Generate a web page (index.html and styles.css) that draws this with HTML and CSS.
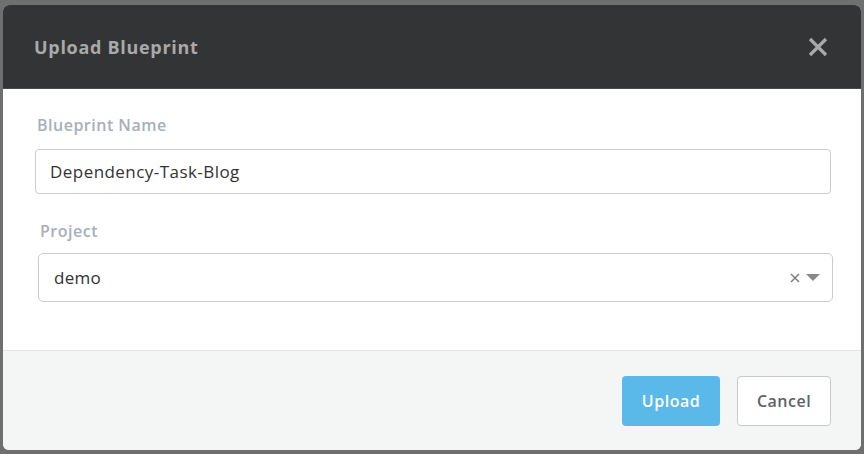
FILE: index.html
```html
<!DOCTYPE html>
<html>
<head>
<meta charset="utf-8">
<link rel="stylesheet" href="styles.css">
</head>
<body>
<div class="modal">
  <div class="header">
    <h1 class="title">Upload Blueprint</h1>
    <svg class="close" width="20" height="20" viewBox="0 0 20 20"><path d="M2 2 L18 18 M18 2 L2 18" stroke="#a9a9a9" stroke-width="3.2" stroke-linecap="butt"/></svg>
  </div>
  <div class="body">
    <div class="field name-field">
      <label class="label">Blueprint Name</label>
      <div class="input">Dependency-Task-Blog</div>
    </div>
    <div class="field project-field">
      <label class="label">Project</label>
      <div class="select">
        <span class="value">demo</span>
        <span class="controls">
          <svg width="10" height="10" viewBox="0 0 10 10"><path d="M1 1 L9 9 M9 1 L1 9" stroke="#777" stroke-width="1.4"/></svg>
          <svg width="14" height="8" viewBox="0 0 14 8"><path d="M0 0 L14 0 L7 7 Z" fill="#888"/></svg>
        </span>
      </div>
    </div>
  </div>
  <div class="footer">
    <button class="btn primary">Upload</button>
    <button class="btn secondary">Cancel</button>
  </div>
</div>
</body>
</html>
```
FILE: styles.css
```css
html, body {
  margin: 0;
  padding: 0;
}
body {
  background: #6f6f6f;
  width: 864px;
  height: 454px;
  overflow: hidden;
  font-family: "Open Sans", Lato, sans-serif;
}
.modal {
  margin: 5px 3px 0 3px;
  width: 858px;
  height: 445px;
  border-radius: 6px;
  overflow: hidden;
  display: flex;
  flex-direction: column;
  background: #fff;
}
.header {
  height: 84px;
  background: #333436;
  border-bottom: 1px solid #4a4b4d;
  display: flex;
  align-items: center;
  justify-content: space-between;
  padding: 0 33px 0 31px;
  box-sizing: border-box;
}
.title {
  margin: 0;
  font-size: 18px;
  font-weight: 700;
  color: #a9a9a9;
  letter-spacing: 0.7px;
}
.body {
  height: 262px;
  padding: 26px 30px 0 32px;
  box-sizing: border-box;
  border-bottom: 1px solid #e3e5e6;
}
.field {
  display: flex;
  flex-direction: column;
}
.label {
  font-size: 16px;
  font-weight: 600;
  letter-spacing: 0.5px;
  line-height: 20px;
  color: #a6b0b9;
  margin-bottom: 14px;
  padding-left: 2px;
}
.input {
  height: 45px;
  border: 1px solid #c9cbcc;
  border-radius: 4px;
  box-sizing: border-box;
  display: flex;
  align-items: center;
  padding-left: 14px;
  font-size: 17px;
  letter-spacing: 0.45px;
  color: #333;
}
.project-field {
  margin-top: 27px;
  padding-left: 3px;
}
.project-field .label {
  margin-bottom: 12px;
}
.select {
  height: 49px;
  border: 1px solid #c9cbcc;
  border-radius: 5px;
  box-sizing: border-box;
  display: flex;
  align-items: center;
  justify-content: space-between;
  padding: 0 12px 0 15px;
  font-size: 17px;
  letter-spacing: 0.3px;
  color: #333;
  margin-right: -2px;
}
.controls {
  display: flex;
  align-items: center;
  gap: 6px;
}
.footer {
  flex: 1;
  background: #f4f5f5;
  display: flex;
  justify-content: flex-end;
  align-items: center;
  gap: 17px;
  padding: 0 30px 0 0;
}
.btn {
  height: 50px;
  border-radius: 4px;
  font-family: "Open Sans", Lato, sans-serif;
  font-size: 16px;
  font-weight: 600;
  letter-spacing: 0.5px;
  box-sizing: border-box;
  margin-top: 1px;
}
.primary {
  width: 98px;
  background: #5bb9e9;
  border: none;
  color: #fff;
}
.secondary {
  width: 94px;
  background: #fff;
  border: 1px solid #c7c9ca;
  color: #5d6266;
}
```
